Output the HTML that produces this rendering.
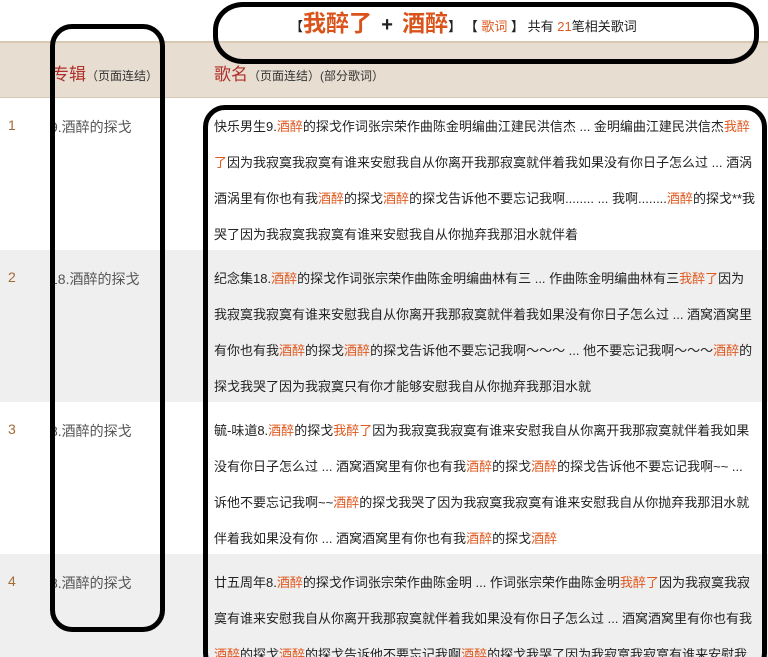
<!DOCTYPE html>
<html><head><meta charset="utf-8"><style>
*{margin:0;padding:0;box-sizing:border-box}
html,body{width:768px;height:657px;overflow:hidden}
body{background:#fff;font-family:"Liberation Sans","Noto Sans CJK SC",sans-serif;color:#222;position:relative}
.o{color:#e0581e}
.top{position:absolute;left:290px;top:4px;white-space:nowrap;font-size:13px;color:#222}
.big{font-size:23px;font-weight:bold;color:#d9531a}
.hdr{position:absolute;left:0;top:41px;width:768px;height:57px;background:#e7ddd0;border-top:2px solid #d8c9b2;border-bottom:1px solid #d8c9b2}
.h1{position:absolute;top:60px;font-size:17px;color:#b0302a;white-space:nowrap}
.h1 small{font-size:12px;color:#333}
.row{position:absolute;left:0;width:768px;height:152px}
.g{background:#efefef}
.num{position:absolute;left:8px;top:19px;font-size:14px;color:#a36a35}
.alb{position:absolute;left:50px;top:19px;font-size:14px;color:#555}
.ly{position:absolute;left:214px;top:11px;font-size:13px;line-height:36px;white-space:nowrap}
.box{position:absolute;border:5px solid #000;border-radius:22px}
</style></head><body>
<div class="top"><span style="font-weight:bold">【</span><span class="big">我醉了</span> <span style="font-size:20px;font-weight:bold">&nbsp;+&nbsp;</span> <span class="big">酒醉</span><span style="font-weight:bold">】</span> <b>【</b> <span class="o">歌词</span> <b>】</b> 共有 <span class="o">21</span>笔相关歌词</div>
<div class="hdr"></div>
<div class="h1" style="left:52px">专辑<small>（页面连结）</small></div>
<div class="h1" style="left:214px">歌名<small>（页面连结）(部分歌词）</small></div>

<div class="row" style="top:98px"><div class="num">1</div><div class="alb">9.酒醉的探戈</div>
<div class="ly">快乐男生9.<span class="o">酒醉</span>的探戈作词张宗荣作曲陈金明编曲江建民洪信杰 ... 金明编曲江建民洪信杰<span class="o">我醉</span><br><span class="o">了</span>因为我寂寞我寂寞有谁来安慰我自从你离开我那寂寞就伴着我如果没有你日子怎么过 ... 酒涡<br>酒涡里有你也有我<span class="o">酒醉</span>的探戈<span class="o">酒醉</span>的探戈告诉他不要忘记我啊........ ... 我啊........<span class="o">酒醉</span>的探戈**我<br>哭了因为我寂寞我寂寞有谁来安慰我自从你抛弃我那泪水就伴着</div></div>

<div class="row g" style="top:250px"><div class="num">2</div><div class="alb">18.酒醉的探戈</div>
<div class="ly">纪念集18.<span class="o">酒醉</span>的探戈作词张宗荣作曲陈金明编曲林有三 ... 作曲陈金明编曲林有三<span class="o">我醉了</span>因为<br>我寂寞我寂寞有谁来安慰我自从你离开我那寂寞就伴着我如果没有你日子怎么过 ... 酒窝酒窝里<br>有你也有我<span class="o">酒醉</span>的探戈<span class="o">酒醉</span>的探戈告诉他不要忘记我啊～～～ ... 他不要忘记我啊～～～<span class="o">酒醉</span>的<br>探戈我哭了因为我寂寞只有你才能够安慰我自从你抛弃我那泪水就</div></div>

<div class="row" style="top:402px"><div class="num">3</div><div class="alb">8.酒醉的探戈</div>
<div class="ly">毓-味道8.<span class="o">酒醉</span>的探戈<span class="o">我醉了</span>因为我寂寞我寂寞有谁来安慰我自从你离开我那寂寞就伴着我如果<br>没有你日子怎么过 ... 酒窝酒窝里有你也有我<span class="o">酒醉</span>的探戈<span class="o">酒醉</span>的探戈告诉他不要忘记我啊~~ ...<br>诉他不要忘记我啊~~<span class="o">酒醉</span>的探戈我哭了因为我寂寞我寂寞有谁来安慰我自从你抛弃我那泪水就<br>伴着我如果没有你 ... 酒窝酒窝里有你也有我<span class="o">酒醉</span>的探戈<span class="o">酒醉</span></div></div>

<div class="row g" style="top:554px;height:103px"><div class="num">4</div><div class="alb">8.酒醉的探戈</div>
<div class="ly">廿五周年8.<span class="o">酒醉</span>的探戈作词张宗荣作曲陈金明 ... 作词张宗荣作曲陈金明<span class="o">我醉了</span>因为我寂寞我寂<br>寞有谁来安慰我自从你离开我那寂寞就伴着我如果没有你日子怎么过 ... 酒窝酒窝里有你也有我<br><span class="o">酒醉</span>的探戈<span class="o">酒醉</span>的探戈告诉他不要忘记我啊<span class="o">酒醉</span>的探戈我哭了因为我寂寞我寂寞有谁来安慰我</div></div>

<div class="box" style="left:50px;top:24px;width:115px;height:608px"></div>
<div class="box" style="left:213px;top:2px;width:546px;height:62px;border-radius:30px/28px"></div>
<div class="box" style="left:203px;top:105px;width:564px;height:570px"></div>
</body></html>
